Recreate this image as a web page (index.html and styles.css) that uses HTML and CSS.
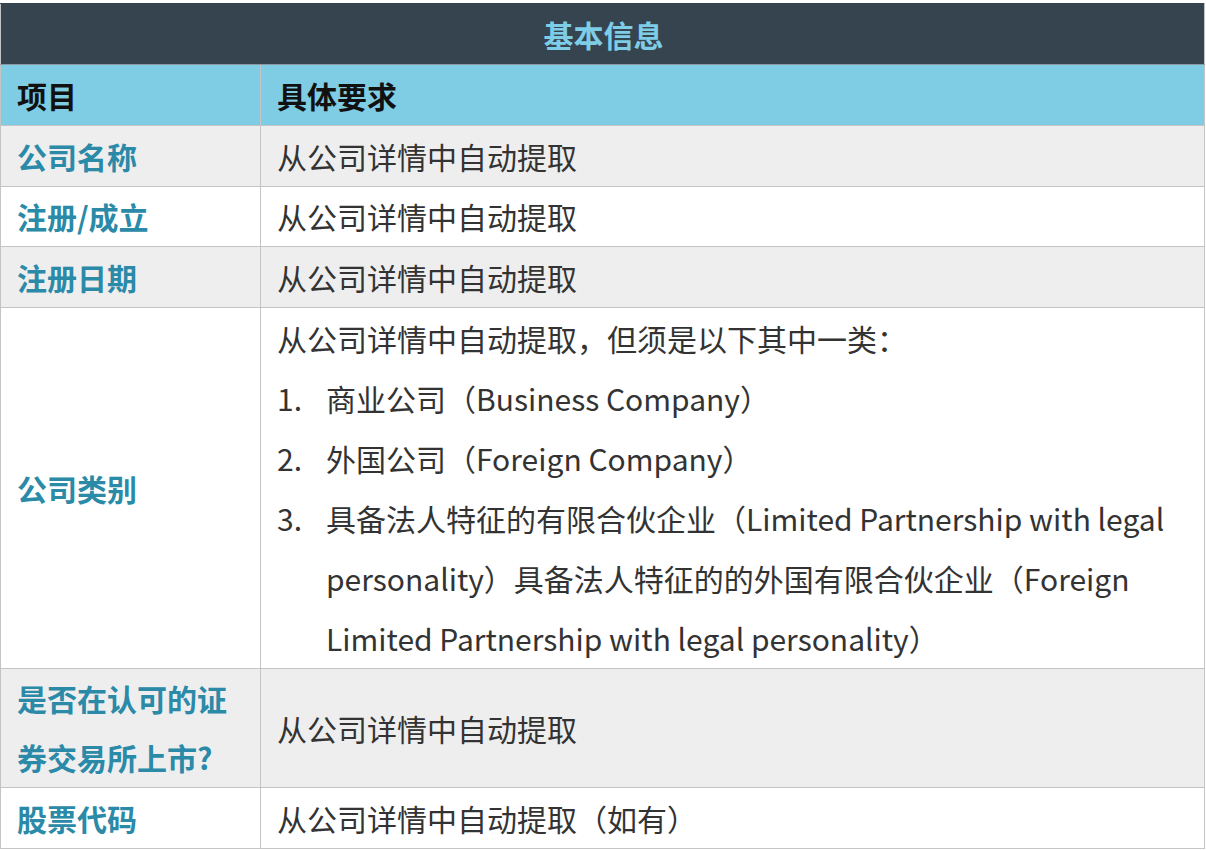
FILE: index.html
```html
<!DOCTYPE html>
<html lang="zh-CN">
<head>
<meta charset="utf-8">
<title>基本信息</title>
<link rel="stylesheet" href="styles.css">
</head>
<body>
<table class="info">
  <colgroup>
    <col class="col-key">
    <col class="col-val">
  </colgroup>
  <thead>
    <tr class="title-row"><th colspan="2">基本信息</th></tr>
    <tr class="head-row"><th>项目</th><th>具体要求</th></tr>
  </thead>
  <tbody>
    <tr class="alt"><td class="key">公司名称</td><td>从公司详情中自动提取</td></tr>
    <tr class="short"><td class="key">注册/成立</td><td>从公司详情中自动提取</td></tr>
    <tr class="alt"><td class="key">注册日期</td><td>从公司详情中自动提取</td></tr>
    <tr>
      <td class="key">公司类别</td>
      <td>
        <div>从公司详情中自动提取，但须是以下其中一类：</div>
        <ol class="list">
          <li><span class="num">1.</span><span class="txt">商业公司（Business Company）</span></li>
          <li><span class="num">2.</span><span class="txt">外国公司（Foreign Company）</span></li>
          <li><span class="num">3.</span><span class="txt">具备法人特征的有限合伙企业（Limited Partnership with legal personality）具备法人特征的的外国有限合伙企业（Foreign Limited Partnership with legal personality）</span></li>
        </ol>
      </td>
    </tr>
    <tr class="alt"><td class="key tight">是否在认可的证券交易所上市?</td><td>从公司详情中自动提取</td></tr>
    <tr><td class="key">股票代码</td><td>从公司详情中自动提取（如有）</td></tr>
  </tbody>
</table>
</body>
</html>
```
FILE: styles.css
```css
html, body {
  margin: 0;
  padding: 0;
  background: #ffffff;
}
body {
  padding-top: 3px;
  font-family: "Noto Sans CJK SC", "Noto Sans", sans-serif;
  font-size: 30px;
  color: #333333;
}
.info {
  width: 1205px;
  border-collapse: collapse;
  table-layout: fixed;
  border: 1px solid #c4c4c4;
}
.col-key { width: 260px; }
.info th,
.info td {
  border: 1px solid #c4c4c4;
  padding: 0 14px 0 16px;
  line-height: 60px;
  height: 60px;
  text-align: left;
  vertical-align: middle;
  box-sizing: border-box;
}
.info .short td {
  height: 59px;
  line-height: 59px;
}
.info td.tight {
  line-height: 59px;
}
.title-row th {
  background: #36444f;
  color: #7ecde6;
  text-align: center;
  font-weight: 700;
  border-color: #36444f #c4c4c4 #8a9aa5 #c4c4c4;
}
.head-row th {
  background: #7fcde5;
  color: #111111;
  font-weight: 700;
}
.alt td { background: #efeeef; }
.key {
  color: #2a8aa7;
  font-weight: 700;
}
.list {
  list-style: none;
  margin: 0;
  padding: 0;
}
.list li {
  display: flex;
}
.num {
  flex: 0 0 49px;
}
.txt {
  flex: 1;
}
```
